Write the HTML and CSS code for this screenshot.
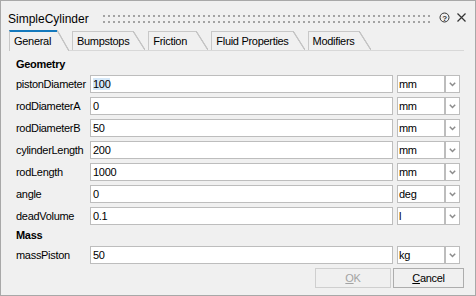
FILE: index.html
```html
<!DOCTYPE html>
<html>

<head>
    <title>SimpleCylinder</title>
    <link rel="stylesheet" href="styles.css">
</head>

<body>
    <div class="window">
        <div class="titlebar">
            <span class="title">SimpleCylinder</span>
            <div class="grip"></div>
            <svg class="help" width="11" height="11" viewBox="0 0 11 11">
                <circle cx="5.5" cy="5.5" r="4.5" fill="none" stroke="#333" stroke-width="1"/>
                <text x="5.5" y="8.5" text-anchor="middle" font-size="8" font-family="Liberation Sans, sans-serif" font-weight="bold" fill="#333">?</text>
            </svg>
            <svg class="close" width="9" height="9" viewBox="0 0 9 9">
                <path d="M0.5 0.5 L8.5 8.5 M8.5 0.5 L0.5 8.5" stroke="#333" stroke-width="1.2"/>
            </svg>
        </div>

        <div class="tabs">
            <div class="tab active"><span class="tab-label">General</span><span class="tab-edge"></span></div>
            <div class="tab"><span class="tab-label">Bumpstops</span><span class="tab-edge"></span></div>
            <div class="tab"><span class="tab-label">Friction</span><span class="tab-edge"></span></div>
            <div class="tab"><span class="tab-label">Fluid Properties</span><span class="tab-edge"></span></div>
            <div class="tab"><span class="tab-label">Modifiers</span><span class="tab-edge"></span></div>
        </div>

        <div class="page">
            <div class="group">Geometry</div>
            <div class="row">
                <span class="label">pistonDiameter</span>
                <div class="field"><span class="sel">100</span></div>
                <div class="unit">mm</div>
                <div class="drop"><svg width="7" height="5" viewBox="0 0 7 5"><path d="M0.8 0.8 L3.5 3.5 L6.2 0.8" fill="none" stroke="#8c8c8c" stroke-width="1.5"/></svg></div>
            </div>
            <div class="row">
                <span class="label">rodDiameterA</span>
                <div class="field">0</div>
                <div class="unit">mm</div>
                <div class="drop"><svg width="7" height="5" viewBox="0 0 7 5"><path d="M0.8 0.8 L3.5 3.5 L6.2 0.8" fill="none" stroke="#8c8c8c" stroke-width="1.5"/></svg></div>
            </div>
            <div class="row">
                <span class="label">rodDiameterB</span>
                <div class="field">50</div>
                <div class="unit">mm</div>
                <div class="drop"><svg width="7" height="5" viewBox="0 0 7 5"><path d="M0.8 0.8 L3.5 3.5 L6.2 0.8" fill="none" stroke="#8c8c8c" stroke-width="1.5"/></svg></div>
            </div>
            <div class="row">
                <span class="label">cylinderLength</span>
                <div class="field">200</div>
                <div class="unit">mm</div>
                <div class="drop"><svg width="7" height="5" viewBox="0 0 7 5"><path d="M0.8 0.8 L3.5 3.5 L6.2 0.8" fill="none" stroke="#8c8c8c" stroke-width="1.5"/></svg></div>
            </div>
            <div class="row">
                <span class="label">rodLength</span>
                <div class="field">1000</div>
                <div class="unit">mm</div>
                <div class="drop"><svg width="7" height="5" viewBox="0 0 7 5"><path d="M0.8 0.8 L3.5 3.5 L6.2 0.8" fill="none" stroke="#8c8c8c" stroke-width="1.5"/></svg></div>
            </div>
            <div class="row">
                <span class="label">angle</span>
                <div class="field">0</div>
                <div class="unit">deg</div>
                <div class="drop"><svg width="7" height="5" viewBox="0 0 7 5"><path d="M0.8 0.8 L3.5 3.5 L6.2 0.8" fill="none" stroke="#8c8c8c" stroke-width="1.5"/></svg></div>
            </div>
            <div class="row">
                <span class="label">deadVolume</span>
                <div class="field">0.1</div>
                <div class="unit">l</div>
                <div class="drop"><svg width="7" height="5" viewBox="0 0 7 5"><path d="M0.8 0.8 L3.5 3.5 L6.2 0.8" fill="none" stroke="#8c8c8c" stroke-width="1.5"/></svg></div>
            </div>

            <div class="group">Mass</div>
            <div class="row">
                <span class="label">massPiston</span>
                <div class="field">50</div>
                <div class="unit">kg</div>
                <div class="drop"><svg width="7" height="5" viewBox="0 0 7 5"><path d="M0.8 0.8 L3.5 3.5 L6.2 0.8" fill="none" stroke="#8c8c8c" stroke-width="1.5"/></svg></div>
            </div>
        </div>

        <div class="buttons">
            <button class="btn btn-ok" disabled><u>O</u>K</button>
            <button class="btn btn-cancel"><u>C</u>ancel</button>
        </div>
    </div>
</body>

</html>
```

FILE: styles.css
```css
body {
    margin: 0;
    padding: 0;
    font-family: "Liberation Sans", Arial, sans-serif;
    font-size: 11px;
    letter-spacing: -0.3px;
    color: #000;
    background-color: #f0f0f0;
}

.window {
    width: 476px;
    height: 296px;
    box-sizing: border-box;
    border: 1px solid #a8a8a8;
    background-color: #f0f0f0;
    display: flex;
    flex-direction: column;
}

/* Title bar */
.titlebar {
    height: 30px;
    box-sizing: border-box;
    padding: 4px 9px 0 7px;
    display: flex;
    align-items: center;
}

.title {
    font-size: 12px;
    letter-spacing: 0;
    line-height: 14px;
    padding-top: 2px;
}

.grip {
    flex: 1;
    height: 8px;
    margin: 2px 9px 0 14px;
    background-image:
        linear-gradient(90deg, transparent 2px, #f0f0f0 2px),
        linear-gradient(#a3a3a3 2px, transparent 2px);
    background-size: 5px 6px;
}

.help {
    margin-right: 7px;
}

/* Tabs */
.tabs {
    height: 20px;
    margin: 0 11px 0 8px;
    border-bottom: 1px solid #d8d8d8;
    display: flex;
    align-items: flex-end;
}

.tab {
    height: 19px;
    display: flex;
    margin-right: 3px;
}

.tab.active {
    height: 21px;
    margin-bottom: -1px;
    z-index: 1;
}

.tab-label {
    min-width: 48px;
    box-sizing: border-box;
    border-top: 1px solid #c8c8c8;
    border-left: 1px solid #c8c8c8;
    padding: 3px 4px 0 4px;
    line-height: 13px;
    background-color: #f0f0f0;
    white-space: nowrap;
}

.tab.active .tab-label {
    border-top: 2px solid #1479bd;
}

.tab-edge {
    width: 12px;
    background: linear-gradient(to top right, #f0f0f0 calc(50% - 1px), #c4c4c4 calc(50% - 0.4px), #c4c4c4 calc(50% + 0.4px), transparent calc(50% + 1px));
}

/* Page content */
.page {
    padding: 7px 0 0 15px;
}

.group {
    font-weight: bold;
    line-height: 13px;
    margin-bottom: 4px;
}

.row {
    display: flex;
    height: 18px;
    margin-bottom: 4px;
}

.label {
    width: 74px;
    line-height: 18px;
    white-space: nowrap;
}

.field,
.unit,
.drop {
    box-sizing: border-box;
    height: 18px;
    background-color: #fff;
    border: 1px solid #bdbdbd;
    line-height: 16px;
}

.field {
    width: 303px;
    padding-left: 2px;
    margin-right: 4px;
}

.sel {
    background-color: #d5e8f8;
}

.unit {
    width: 48px;
    padding-left: 1px;
}

.drop {
    width: 15px;
    display: flex;
    align-items: center;
    justify-content: center;
}

/* Buttons */
.buttons {
    margin-top: auto;
    padding: 0 11px 7px 0;
    display: flex;
    justify-content: flex-end;
    gap: 2px;
}

.btn {
    height: 20px;
    box-sizing: border-box;
    font-family: "Liberation Sans", Arial, sans-serif;
    font-size: 11px;
    letter-spacing: -0.3px;
    line-height: 16px;
    padding: 0;
    background-color: #f0f0f0;
    border: 1px solid #adadad;
    color: #000;
}

.btn-ok {
    width: 76px;
    border-color: #cfcfcf;
    color: #a3a3a3;
}

.btn-cancel {
    width: 71px;
}
```
